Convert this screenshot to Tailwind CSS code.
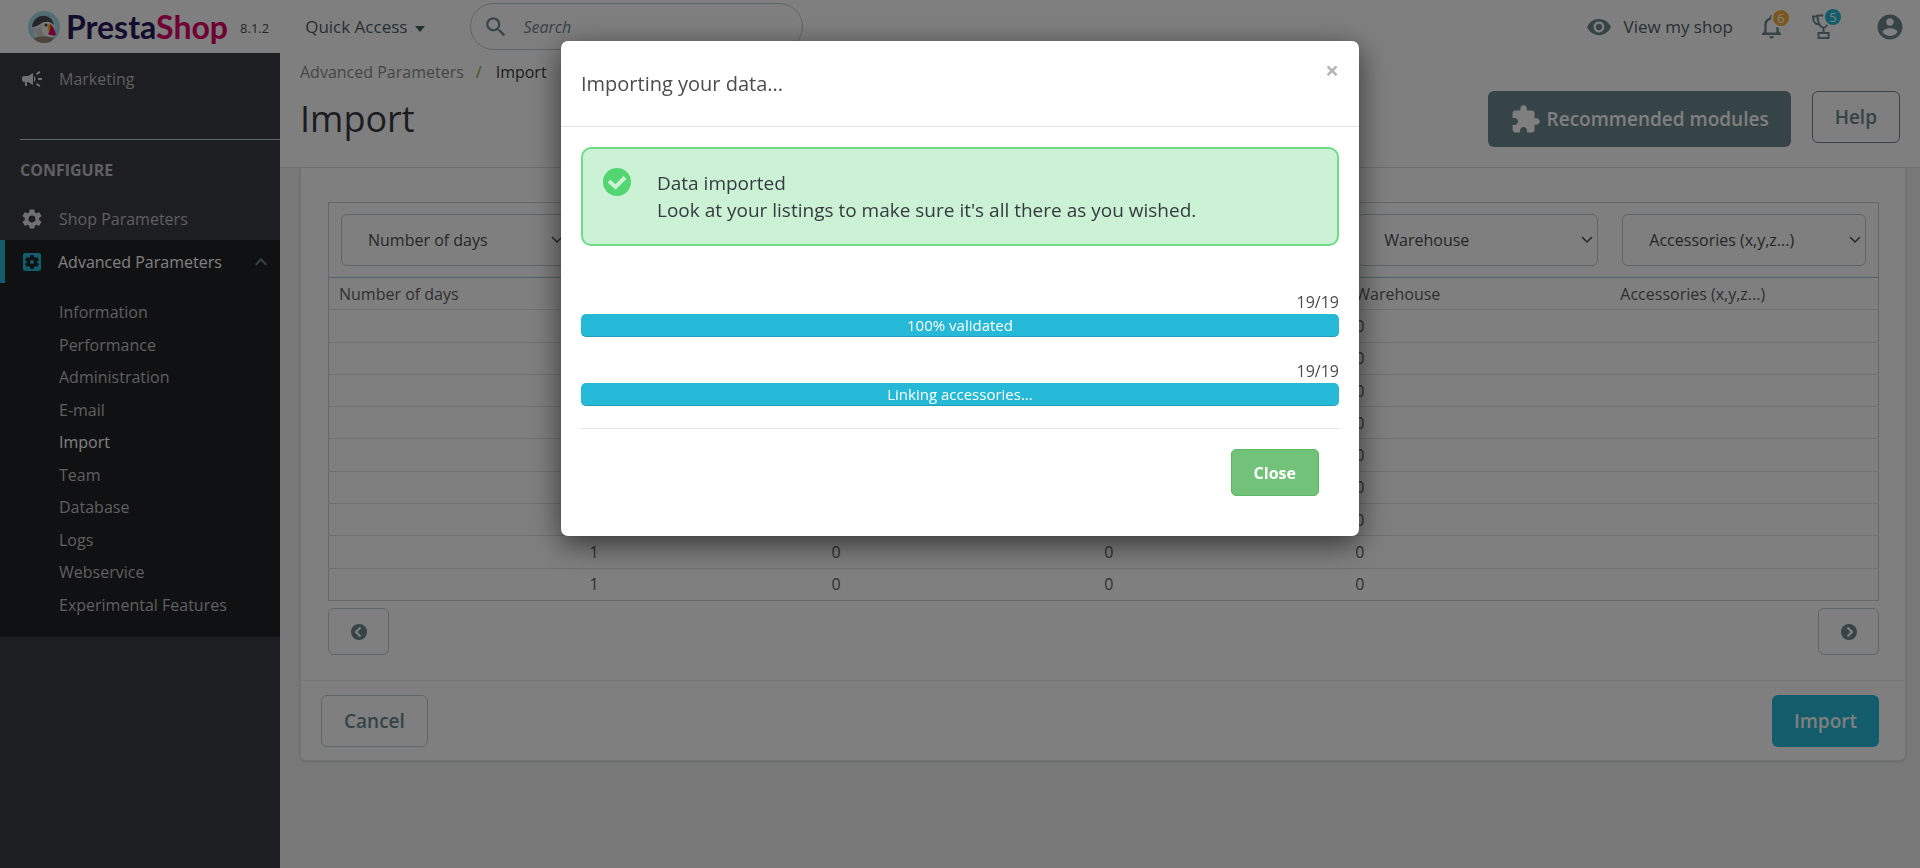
<!DOCTYPE html>
<html lang="en">
<head>
  <meta charset="UTF-8">
  <meta name="viewport" content="width=device-width, initial-scale=1.0">
  <title>Import • PrestaShop</title>
  <script src="https://cdn.jsdelivr.net/npm/@tailwindcss/browser@4"></script>
</head>
<body class="flex h-screen flex-col overflow-hidden bg-[#f1f1f1] font-['Open_Sans',sans-serif] text-base text-[#363a41]">

  <!-- Top bar -->
  <header class="flex h-[53px] shrink-0 items-center bg-white pr-[15px] text-[#4c6066]">
    <a href="#" class="ml-7 flex items-center">
      <svg class="size-8" viewBox="0 0 32 32" aria-hidden="true">
        <defs><clipPath id="face"><circle cx="16" cy="16" r="16"/></clipPath></defs>
        <g clip-path="url(#face)">
          <rect width="32" height="32" fill="#a4dbe8"/>
          <path d="M5 16C5 9 10 5 16 5c7 0 11 5 11 12l-3 12H8z" fill="#f2f0ee"/>
          <path d="M4 16C5 8 11 4 17 5c5 .6 8 4 9 9-3-3-6-4-9-3-4 0-6 5-13 5z" fill="#4b4b52"/>
          <path d="M5 17c4 1 7-1 9-4-1 7 0 10 5 13l-9 1z" fill="#d2cfcf"/>
          <circle cx="18" cy="14" r="1.500" fill="#3a3a3f"/>
          <path d="M20 13c2 0 3 1 4 3l-3 6c-1-3-2-6-1-9z" fill="#fbbb22"/>
          <path d="M22 13c3 2 5 6 6 11-3 1-6 0-8-1 2-3 3-6 2-10z" fill="#df0067"/>
          <path d="M6 27c6-2 14-2 20 0l-4 5H9z" fill="#9b8579"/>
        </g>
      </svg>
      <span class="ml-1.5 font-['Lato',sans-serif] text-[32px] leading-8 font-bold text-[#251b5b]">Presta<span class="text-[#df0067]">Shop</span></span>
    </a>
    <span class="mt-1 ml-3 text-[13px] text-[#4c4c4c]">8.1.2</span>
    <button class="ml-9 flex items-center gap-2 text-[17px]">
      <span>Quick Access</span>
      <svg class="mt-1 h-[6px] w-[10px] fill-current" viewBox="0 0 10 6" aria-hidden="true"><path d="M0 0h10L5 6z"/></svg>
    </button>
    <form class="ml-[45px] flex h-[47px] w-[333px] items-center rounded-full border border-[#bbcdd2] pl-3">
      <label for="search">
        <svg class="size-[26px] fill-[#6c868e]" viewBox="0 0 24 24" role="img" aria-label="Search"><path d="M15.5 14h-.79l-.28-.27C15.41 12.59 16 11.11 16 9.5 16 5.91 13.09 3 9.5 3S3 5.91 3 9.5 5.91 16 9.5 16c1.61 0 3.09-.59 4.23-1.57l.27.28v.79l5 4.99L20.49 19l-4.99-5zm-6 0C7.01 14 5 11.99 5 9.5S7.01 5 9.5 5 14 7.01 14 9.5 11.99 14 9.5 14z"/></svg>
      </label>
      <input id="search" type="text" placeholder="Search" class="ml-[14px] w-60 italic outline-none placeholder:text-[#6c868e]">
    </form>
    <div class="ml-auto flex items-center">
      <a href="#" class="flex items-center gap-3 text-[17px]">
        <svg class="size-[26px] fill-[#6c868e]" viewBox="0 0 24 24" aria-hidden="true"><path d="M12 4.5C7 4.5 2.73 7.61 1 12c1.73 4.39 6 7.5 11 7.5s9.27-3.11 11-7.5c-1.73-4.39-6-7.5-11-7.5zM12 17c-2.76 0-5-2.24-5-5s2.24-5 5-5 5 2.24 5 5-2.24 5-5 5zm0-8c-1.66 0-3 1.34-3 3s1.34 3 3 3 3-1.34 3-3-1.34-3-3-3z"/></svg>
        View my shop
      </a>
      <button aria-label="Notifications" class="relative ml-6">
        <svg class="size-[29px] fill-[#6c868e]" viewBox="0 0 24 24" aria-hidden="true"><path d="M12 22c1.1 0 2-.9 2-2h-4c0 1.1.9 2 2 2zm6-6v-5c0-3.07-1.63-5.64-4.5-6.32V4c0-.83-.67-1.5-1.5-1.5s-1.5.67-1.5 1.5v.68C7.64 5.36 6 7.92 6 11v5l-2 2v1h16v-1l-2-2zm-2 1H8v-6c0-2.48 1.51-4.5 4-4.5s4 2.02 4 4.5v6z"/></svg>
        <span class="absolute -top-1 left-[14px] size-5 rounded-full border-2 border-white bg-[#f4b03b] text-center text-[13px] leading-4 text-white">6</span>
      </button>
      <button aria-label="Achievements" class="relative ml-[23px]">
        <svg class="size-[29px] fill-none stroke-[#6c868e] stroke-2" viewBox="0 0 29 29" aria-hidden="true">
          <path d="M8.500 3.500h12c0 7-2 11-6 12.500-4-1.500-6-5.500-6-12.500zM8.500 4.500H4c0 4.500 2 8 6.500 8M20.500 4.500H25c0 4.500-2 8-6.500 8M14.500 16v5M9.500 21h10v5h-10z"/>
        </svg>
        <span class="absolute -top-[5px] left-[14px] size-5 rounded-full border-2 border-white bg-[#25b9d7] text-center text-[13px] leading-4 text-white">5</span>
      </button>
      <button aria-label="Account" class="ml-[37px]">
        <svg class="size-[30px] fill-[#6c868e]" viewBox="0 0 24 24" aria-hidden="true"><path d="M12 2C6.480 2 2 6.480 2 12s4.480 10 10 10 10-4.480 10-10S17.520 2 12 2zm0 3c1.660 0 3 1.340 3 3s-1.340 3-3 3-3-1.340-3-3 1.340-3 3-3zm0 14.200c-2.500 0-4.710-1.280-6-3.220.03-1.990 4-3.080 6-3.080 1.990 0 5.970 1.090 6 3.080-1.290 1.940-3.500 3.220-6 3.220z"/></svg>
      </button>
    </div>
  </header>

  <div class="flex min-h-0 flex-1">
    <!-- Sidebar -->
    <nav class="w-[280px] shrink-0 bg-[#3a3c44] text-[#bebebe]">
      <a href="#" class="flex h-[52px] items-center gap-[15px] pl-5">
        <svg class="size-6 fill-[#e0e0e0]" viewBox="0 0 24 24" aria-hidden="true"><path d="M18 11v2h4v-2h-4zm-2 6.610c.96.71 2.210 1.650 3.200 2.390.4-.53.8-1.070 1.200-1.600-.99-.74-2.240-1.680-3.200-2.400-.4.54-.8 1.080-1.200 1.610zM20.400 5.600c-.4-.53-.8-1.070-1.200-1.600-.99.74-2.240 1.680-3.200 2.400.4.53.8 1.070 1.200 1.600.96-.72 2.210-1.650 3.200-2.400zM4 9c-1.100 0-2 .9-2 2v2c0 1.100.9 2 2 2h1v4h2v-4h1l5 3V6L8 9H4zm11.500 3c0-1.330-.58-2.530-1.500-3.350v6.690c.92-.81 1.500-2.010 1.500-3.340z"/></svg>
        Marketing
      </a>
      <h2 class="mt-[34px] ml-5 border-t border-[#bbcdd2] pt-[18px] font-bold">CONFIGURE</h2>
      <a href="#" class="mt-[15px] flex h-[43px] items-center gap-[15px] pl-5">
        <svg class="size-6 fill-[#e0e0e0]" viewBox="0 0 24 24" aria-hidden="true"><path d="M19.14,12.94c0.04-0.3,0.06-0.61,0.06-0.94c0-0.32-0.02-0.64-0.07-0.94l2.03-1.58c0.18-0.14,0.23-0.41,0.12-0.61l-1.92-3.32c-0.12-0.22-0.37-0.29-0.59-0.22l-2.39,0.96c-0.5-0.38-1.03-0.7-1.62-0.94L14.4,2.81c-0.04-0.24-0.24-0.41-0.48-0.41h-3.84c-0.24,0-0.43,0.17-0.47,0.41L9.25,5.35C8.66,5.59,8.12,5.92,7.63,6.29L5.24,5.33c-0.22-0.08-0.47,0-0.59,0.22L2.74,8.87C2.62,9.08,2.66,9.34,2.86,9.48l2.03,1.58C4.84,11.36,4.8,11.69,4.8,12s0.02,0.64,0.07,0.94l-2.03,1.58c-0.18,0.14-0.23,0.41-0.12,0.61l1.92,3.32c0.12,0.22,0.37,0.29,0.59,0.22l2.39-0.96c0.5,0.38,1.03,0.7,1.62,0.94l0.36,2.54c0.05,0.24,0.24,0.41,0.48,0.41h3.84c0.24,0,0.44-0.17,0.47-0.41l0.36-2.54c0.59-0.24,1.13-0.56,1.62-0.94l2.39,0.96c0.22,0.08,0.47,0,0.59-0.22l1.92-3.32c0.12-0.22,0.07-0.47-0.12-0.61L19.14,12.94z M12,15.6c-1.98,0-3.6-1.62-3.6-3.6s1.62-3.6,3.6-3.6s3.6,1.62,3.6,3.6S13.98,15.6,12,15.6z"/></svg>
        Shop Parameters
      </a>
      <div class="bg-[#202226]">
        <a href="#" class="flex h-[43px] items-center gap-[14px] border-l-[5px] border-[#25b9d7] pr-[7px] pl-[15px] text-white">
          <svg class="size-6 fill-[#25b9d7]" viewBox="0 0 24 24" aria-hidden="true"><path d="M12 10c-1.100 0-2 .9-2 2s.9 2 2 2 2-.9 2-2-.9-2-2-2zm7-7H5c-1.110 0-2 .9-2 2v14c0 1.100.89 2 2 2h14c1.110 0 2-.9 2-2V5c0-1.100-.89-2-2-2zm-1.750 9c0 .23-.02.46-.05.68l1.480 1.160c.13.11.17.3.08.45l-1.400 2.420c-.09.15-.27.21-.43.15l-1.740-.7c-.36.28-.76.51-1.180.69l-.26 1.850c-.03.17-.18.3-.35.3h-2.800c-.17 0-.32-.13-.35-.29l-.26-1.850c-.43-.18-.82-.41-1.180-.69l-1.740.7c-.16.06-.34 0-.43-.15l-1.400-2.420c-.09-.15-.05-.34.08-.45l1.480-1.160c-.03-.23-.05-.46-.05-.69 0-.23.02-.46.05-.68l-1.480-1.160c-.13-.11-.17-.3-.08-.45l1.400-2.420c.09-.15.27-.21.43-.15l1.740.7c.36-.28.76-.51 1.180-.69l.26-1.850c.03-.17.18-.3.35-.3h2.800c.17 0 .32.13.35.29l.26 1.850c.43.18.82.41 1.180.69l1.740-.7c.16-.06.34 0 .43.15l1.400 2.420c.09.15.05.34-.08.45l-1.480 1.160c.03.23.05.46.05.69z"/></svg>
          Advanced Parameters
          <svg class="ml-auto size-6 fill-[#6c868e]" viewBox="0 0 24 24" aria-hidden="true"><path d="M12 8l-6 6 1.410 1.410L12 10.830l4.590 4.580L18 14z"/></svg>
        </a>
        <ul class="grid h-[354px] auto-rows-fr items-center pt-[13px] pb-4 pl-[59px]">
          <li><a href="#">Information</a></li>
          <li><a href="#">Performance</a></li>
          <li><a href="#">Administration</a></li>
          <li><a href="#">E-mail</a></li>
          <li><a href="#" class="text-white">Import</a></li>
          <li><a href="#">Team</a></li>
          <li><a href="#">Database</a></li>
          <li><a href="#">Logs</a></li>
          <li><a href="#">Webservice</a></li>
          <li><a href="#">Experimental Features</a></li>
        </ul>
      </div>
    </nav>

    <main class="min-w-0 flex-1">
      <!-- Page heading -->
      <div class="flex h-[115px] justify-between border-b border-[#dfdfdf] bg-white pr-5 pl-5">
        <div>
          <ol class="flex pt-[7px] leading-6 text-[#8c8c8c]">
            <li><a href="#">Advanced Parameters</a></li>
            <li class="px-3 text-[#70b029]">/</li>
            <li class="ml-0.5 text-[#363a41]">Import</li>
          </ol>
          <h1 class="mt-[11px] text-[36px] leading-[48px]">Import</h1>
        </div>
        <div class="flex items-start gap-[21px] pt-[38px]">
          <a href="#" class="flex h-[56px] items-center gap-1.5 rounded-md bg-[#6c868e] px-[22px] text-[19px] font-semibold text-white">
            <svg class="size-[31px] fill-current" viewBox="0 0 24 24" aria-hidden="true"><path d="M20.500 11H19V7c0-1.100-.9-2-2-2h-4V3.500C13 2.120 11.880 1 10.500 1S8 2.120 8 3.500V5H4c-1.100 0-1.990.9-1.990 2v3.800H3.500c1.490 0 2.700 1.210 2.700 2.700s-1.210 2.700-2.700 2.700H2V20c0 1.100.9 2 2 2h3.800v-1.500c0-1.490 1.210-2.700 2.700-2.700 1.490 0 2.700 1.210 2.700 2.700V22H17c1.100 0 2-.9 2-2v-4h1.500c1.380 0 2.500-1.120 2.500-2.500S21.880 11 20.500 11z"/></svg>
            Recommended modules
          </a>
          <a href="#" class="flex h-[52px] items-center rounded-md border border-[#6c868e] px-[22px] text-[19px] font-semibold text-[#6c868e]">Help</a>
        </div>
      </div>

      <!-- Import matching card -->
      <form class="mr-[14px] ml-5 rounded-b-md border border-t-0 border-[#dbe6e9] bg-white shadow-sm">
        <div class="pt-[34px] pr-[26px] pb-[25px] pl-[27px]">
          <table class="h-[399px] w-full table-fixed border-collapse border border-[#cfcfcf] text-[#606060]">
            <colgroup>
              <col class="w-[16.2%]">
              <col class="w-[15.6%]">
              <col class="w-[17.6%]">
              <col class="w-[16.2%]">
              <col class="w-[17.1%]">
              <col>
            </colgroup>
            <thead>
              <tr class="h-[75px] border-b border-[#a3c6dd]">
                <th class="px-3 font-normal">
                  <div class="relative">
                    <select aria-label="Column 1" class="h-[52px] w-full appearance-none rounded-md border border-[#bbcdd2] px-[26px] text-[#4c4c4c]"><option>Number of days</option></select>
                    <svg class="pointer-events-none absolute top-[22px] right-[5px] h-2 w-3 fill-none stroke-[#4c4c4c] stroke-[1.500]" viewBox="0 0 12 8"><path d="M1 1l5 5 5-5"/></svg>
                  </div>
                </th>
                <th class="px-3 font-normal">
                  <div class="relative">
                    <select aria-label="Column 2" class="h-[52px] w-full appearance-none rounded-md border border-[#bbcdd2] px-[26px] text-[#4c4c4c]"><option>ID / Name of shop</option></select>
                    <svg class="pointer-events-none absolute top-[22px] right-[5px] h-2 w-3 fill-none stroke-[#4c4c4c] stroke-[1.500]" viewBox="0 0 12 8"><path d="M1 1l5 5 5-5"/></svg>
                  </div>
                </th>
                <th class="px-3 font-normal">
                  <div class="relative">
                    <select aria-label="Column 3" class="h-[52px] w-full appearance-none rounded-md border border-[#bbcdd2] px-[26px] text-[#4c4c4c]"><option>Advanced stock management</option></select>
                    <svg class="pointer-events-none absolute top-[22px] right-[5px] h-2 w-3 fill-none stroke-[#4c4c4c] stroke-[1.500]" viewBox="0 0 12 8"><path d="M1 1l5 5 5-5"/></svg>
                  </div>
                </th>
                <th class="px-3 font-normal">
                  <div class="relative">
                    <select aria-label="Column 4" class="h-[52px] w-full appearance-none rounded-md border border-[#bbcdd2] px-[26px] text-[#4c4c4c]"><option>Depends on stock</option></select>
                    <svg class="pointer-events-none absolute top-[22px] right-[5px] h-2 w-3 fill-none stroke-[#4c4c4c] stroke-[1.500]" viewBox="0 0 12 8"><path d="M1 1l5 5 5-5"/></svg>
                  </div>
                </th>
                <th class="px-3 font-normal">
                  <div class="relative">
                    <select aria-label="Column 5" class="h-[52px] w-full appearance-none rounded-md border border-[#bbcdd2] px-[26px] text-[#4c4c4c]"><option>Warehouse</option></select>
                    <svg class="pointer-events-none absolute top-[22px] right-[5px] h-2 w-3 fill-none stroke-[#4c4c4c] stroke-[1.500]" viewBox="0 0 12 8"><path d="M1 1l5 5 5-5"/></svg>
                  </div>
                </th>
                <th class="px-3 font-normal">
                  <div class="relative">
                    <select aria-label="Column 6" class="h-[52px] w-full appearance-none rounded-md border border-[#bbcdd2] px-[26px] text-[#4c4c4c]"><option>Accessories (x,y,z...)</option></select>
                    <svg class="pointer-events-none absolute top-[22px] right-[5px] h-2 w-3 fill-none stroke-[#4c4c4c] stroke-[1.500]" viewBox="0 0 12 8"><path d="M1 1l5 5 5-5"/></svg>
                  </div>
                </th>
              </tr>
            </thead>
            <tbody class="divide-y divide-[#e2e3e4]">
              <tr class="h-8">
                <td class="px-[10px]">Number of days</td>
                <td class="px-[10px]">ID / Name of shop</td>
                <td class="px-[10px]">Advanced stock management</td>
                <td class="px-[10px]">Depends on stock</td>
                <td class="px-[10px]">Warehouse</td>
                <td class="px-[10px]">Accessories (x,y,z...)</td>
              </tr>
              <tr class="h-8"><td></td><td class="px-[10px]">1</td><td class="px-[10px]">0</td><td class="px-[10px]">0</td><td class="px-[10px]">0</td><td></td></tr>
              <tr class="h-8"><td></td><td class="px-[10px]">1</td><td class="px-[10px]">0</td><td class="px-[10px]">0</td><td class="px-[10px]">0</td><td></td></tr>
              <tr class="h-8"><td></td><td class="px-[10px]">1</td><td class="px-[10px]">0</td><td class="px-[10px]">0</td><td class="px-[10px]">0</td><td></td></tr>
              <tr class="h-8"><td></td><td class="px-[10px]">1</td><td class="px-[10px]">0</td><td class="px-[10px]">0</td><td class="px-[10px]">0</td><td></td></tr>
              <tr class="h-8"><td></td><td class="px-[10px]">1</td><td class="px-[10px]">0</td><td class="px-[10px]">0</td><td class="px-[10px]">0</td><td></td></tr>
              <tr class="h-8"><td></td><td class="px-[10px]">1</td><td class="px-[10px]">0</td><td class="px-[10px]">0</td><td class="px-[10px]">0</td><td></td></tr>
              <tr class="h-8"><td></td><td class="px-[10px]">1</td><td class="px-[10px]">0</td><td class="px-[10px]">0</td><td class="px-[10px]">0</td><td></td></tr>
              <tr class="h-8"><td></td><td class="px-[10px]">1</td><td class="px-[10px]">0</td><td class="px-[10px]">0</td><td class="px-[10px]">0</td><td></td></tr>
              <tr class="h-8"><td></td><td class="px-[10px]">1</td><td class="px-[10px]">0</td><td class="px-[10px]">0</td><td class="px-[10px]">0</td><td></td></tr>
            </tbody>
          </table>
          <div class="mt-[7px] flex justify-between">
            <button type="button" aria-label="Previous columns" class="flex h-[47px] w-[61px] items-center justify-center rounded-md border border-[#bbcdd2]">
              <svg class="size-4" viewBox="0 0 16 16"><circle cx="8" cy="8" r="8" fill="#6c868e"/><path d="M9.500 3.500L5 8l4.500 4.500" fill="none" stroke="#fff" stroke-width="2.200"/></svg>
            </button>
            <button type="button" aria-label="Next columns" class="flex h-[47px] w-[61px] items-center justify-center rounded-md border border-[#bbcdd2]">
              <svg class="size-4" viewBox="0 0 16 16"><circle cx="8" cy="8" r="8" fill="#6c868e"/><path d="M6.500 3.500L11 8l-4.500 4.500" fill="none" stroke="#fff" stroke-width="2.200"/></svg>
            </button>
          </div>
        </div>
        <div class="flex justify-between border-t border-[#eaebec] pt-[14px] pr-[26px] pb-[13px] pl-5">
          <button type="button" class="h-[52px] rounded-md border border-[#bbcdd2] px-[22px] text-[19px] font-semibold text-[#6c868e]">Cancel</button>
          <button type="button" class="h-[52px] rounded-md bg-[#25b9d7] px-[22px] text-[19px] font-semibold text-white">Import</button>
        </div>
      </form>
    </main>
  </div>

  <!-- Import progress modal -->
  <div class="fixed inset-0 bg-black/50 pt-[41px]">
    <div role="dialog" aria-modal="true" aria-labelledby="modal-title" class="mx-auto w-[798px] rounded-[7px] bg-white pb-10 text-[#4c4c4c] shadow-[0_8px_30px_rgba(0,0,0,0.6)]">
      <div class="flex h-[86px] items-center justify-between border-b border-[#e5e5e5] px-5">
        <h4 id="modal-title" class="text-xl">Importing your data...</h4>
        <button aria-label="Close dialog" class="-mt-7 text-2xl font-bold text-[#b5b5b5]">×</button>
      </div>
      <div class="px-5 pt-5">
        <div role="alert" class="flex h-[99px] gap-[26px] rounded-[10px] border-2 border-[#6ddb87] bg-[#cbf2d4] px-5 pt-[19px] text-[19px] leading-[27px] text-[#363a41]">
          <svg class="size-7 shrink-0" viewBox="0 0 28 28" aria-hidden="true"><circle cx="14" cy="14" r="14" fill="#53d572"/><path d="M6 13l6.500 6L22 9.500" fill="none" stroke="#cbf2d4" stroke-width="4"/></svg>
          <p class="pt-0.5">Data imported<br>Look at your listings to make sure it's all there as you wished.</p>
        </div>
        <p class="mt-11 text-right leading-6">19/19</p>
        <div class="h-[23px] rounded-[5px] border-b border-[#1f9db6] bg-[#25b9d7] text-center text-[15px] leading-[22px] text-white">100% validated</div>
        <p class="mt-[22px] text-right leading-6">19/19</p>
        <div class="h-[23px] rounded-[5px] border-b border-[#1f9db6] bg-[#25b9d7] text-center text-[15px] leading-[22px] text-white">Linking accessories...</div>
        <div class="mt-[22px] flex justify-end border-t border-[#e5e5e5] px-5 pt-5">
          <button class="h-[47px] rounded-[5px] border border-[#5cb866] bg-[#72c279] px-[22px] font-bold text-white">Close</button>
        </div>
      </div>
    </div>
  </div>
</body>
</html>
